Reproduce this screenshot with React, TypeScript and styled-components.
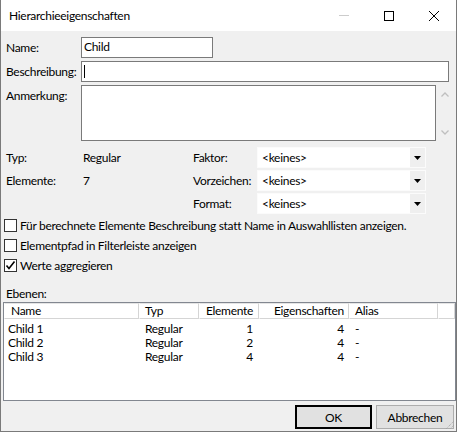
import styled, { createGlobalStyle } from "styled-components";

const GlobalStyle = createGlobalStyle`
  html, body {
    margin: 0;
    padding: 0;
    background: #ffffff;
  }
  body {
    font-family: Lato, "Liberation Sans", sans-serif;
    font-size: 12px;
    letter-spacing: -0.3px;
    color: #000;
  }
  * {
    box-sizing: border-box;
  }
`;

const Window = styled.div`
  position: relative;
  width: 457px;
  height: 432px;
  display: flex;
  flex-direction: column;
  background: #f0f0f0;
  border: 1px solid #7a7a7a;
  border-top: none;
  overflow: hidden;
`;

const TitleBar = styled.div`
  height: 31px;
  flex: none;
  display: flex;
  align-items: center;
  background: #ffffff;
  padding-left: 8px;
`;

const TitleText = styled.div`
  flex: 1;
  line-height: 16px;
`;

const CaptionButton = styled.div`
  width: 45px;
  height: 31px;
  display: flex;
  align-items: center;
  justify-content: center;
`;

const Content = styled.div`
  flex: 1;
  display: flex;
  flex-direction: column;
  padding: 6px 7px 0 5px;
`;

const TopForm = styled.div`
  display: grid;
  grid-template-columns: 75px 1fr;
  row-gap: 3px;
`;

const Label = styled.div<{ $top?: boolean }>`
  align-self: ${(p) => (p.$top ? "start" : "center")};
  padding-top: ${(p) => (p.$top ? "3px" : "0")};
  line-height: 16px;
  white-space: nowrap;
`;

const TextBox = styled.div<{ $width?: number; $height: number }>`
  width: ${(p) => (p.$width ? `${p.$width}px` : "auto")};
  height: ${(p) => p.$height}px;
  background: #ffffff;
  border: 1px solid #7a7a7a;
  padding: 1px 2px;
  line-height: 16px;
  display: flex;
  align-items: flex-start;
`;

const Caret = styled.span`
  display: block;
  width: 1px;
  height: 13px;
  margin-top: 2px;
  background: #000;
`;

const NoteRow = styled.div`
  display: flex;
  margin-right: -4px;
`;

const ScrollBar = styled.div`
  width: 17px;
  flex: none;
  display: flex;
  flex-direction: column;
  justify-content: space-between;
  align-items: center;
  padding: 7px 0 6px;
`;

const PropsGrid = styled.div`
  margin-top: 6px;
  display: grid;
  grid-template-columns: 77px 110px 64px 169px;
  grid-auto-rows: 21px;
  row-gap: 2px;
  align-items: center;
`;

const Combo = styled.div`
  height: 21px;
  display: flex;
  background: #ffffff;
  border: 1px solid #fbfbfb;
`;

const ComboText = styled.div`
  flex: 1;
  padding-left: 4px;
  line-height: 19px;
`;

const DropButton = styled.div`
  width: 15px;
  display: flex;
  align-items: center;
  justify-content: center;
  background: #efefef;
`;

const Checks = styled.div`
  margin-top: 1px;
  margin-left: -2px;
  display: flex;
  flex-direction: column;
`;

const CheckRow = styled.div`
  height: 20px;
  display: flex;
  align-items: center;
  gap: 3px;
`;

const Box = styled.div`
  width: 13px;
  height: 13px;
  border: 1px solid #333333;
  background: #ffffff;
  display: flex;
  align-items: center;
  justify-content: center;
`;

const SectionLabel = styled.div`
  margin-top: 11px;
  line-height: 16px;
`;

const ListView = styled.div`
  height: 99px;
  margin: 0 -7px 0 -3px;
  background: #ffffff;
  border: 1px solid #828790;
  overflow: hidden;
`;

const Columns = styled.div`
  display: grid;
  grid-template-columns: 135px 60px 60px 90px 89px 1fr;
`;

const Header = styled(Columns)`
  height: 16px;
`;

const HeadCell = styled.div<{ $right?: boolean; $pad: number }>`
  line-height: 14px;
  text-align: ${(p) => (p.$right ? "right" : "left")};
  padding: ${(p) => (p.$right ? `0 ${p.$pad}px 0 0` : `0 0 0 ${p.$pad}px`)};
  background: #ffffff;
  border: 1px solid #e5e5e5;
  border-left-color: #ffffff;
  border-right-color: #d5d5d5;
  border-bottom-color: #d5d5d5;
  white-space: nowrap;
`;

const Rows = styled.div`
  padding-top: 3px;
`;

const Cell = styled.div<{ $right?: boolean; $pad: number }>`
  line-height: 14px;
  text-align: ${(p) => (p.$right ? "right" : "left")};
  padding: ${(p) => (p.$right ? `0 ${p.$pad}px 0 0` : `0 0 0 ${p.$pad}px`)};
  white-space: nowrap;
`;

const ButtonRow = styled.div`
  margin: 4px -5px 0 0;
  display: flex;
  justify-content: flex-end;
  gap: 4px;
`;

const Button = styled.button<{ $default?: boolean; $width: number }>`
  width: ${(p) => p.$width}px;
  height: 24px;
  padding: 0;
  font-family: inherit;
  font-size: 12px;
  letter-spacing: inherit;
  color: #000;
  background: #e1e1e1;
  border: ${(p) => (p.$default ? "2px solid #000000" : "1px solid #adadad")};
`;

const Grip = styled.svg`
  position: absolute;
  right: 1px;
  bottom: 1px;
`;

const levels = [
  { name: "Child 1", typ: "Regular", elements: 1, props: 4, alias: "-" },
  { name: "Child 2", typ: "Regular", elements: 2, props: 4, alias: "-" },
  { name: "Child 3", typ: "Regular", elements: 4, props: 4, alias: "-" },
];

function Chevron({ up }: { up?: boolean }) {
  return (
    <svg width="8" height="5" viewBox="0 0 8 5">
      <path
        d={up ? "M0.5 4.5 L4 1 L7.5 4.5" : "M0.5 0.5 L4 4 L7.5 0.5"}
        fill="none"
        stroke="#bfbfbf"
        strokeWidth="1.3"
      />
    </svg>
  );
}

function Arrow() {
  return (
    <svg width="7" height="4" viewBox="0 0 7 4">
      <path d="M0 0 H7 L3.5 4 Z" fill="#000" />
    </svg>
  );
}

function Check({ checked, label }: { checked?: boolean; label: string }) {
  return (
    <CheckRow>
      <Box>
        {checked && (
          <svg width="11" height="11" viewBox="0 0 11 11">
            <path d="M1.5 5.5 L4 8.5 L9.5 1.5" fill="none" stroke="#000" strokeWidth="1.6" />
          </svg>
        )}
      </Box>
      <span>{label}</span>
    </CheckRow>
  );
}

function Select({ value }: { value: string }) {
  return (
    <Combo>
      <ComboText>{value}</ComboText>
      <DropButton>
        <Arrow />
      </DropButton>
    </Combo>
  );
}

export default function App() {
  return (
    <>
      <GlobalStyle />
      <Window>
        <TitleBar>
          <TitleText>Hierarchieeigenschaften</TitleText>
          <CaptionButton>
            <svg width="10" height="1" viewBox="0 0 10 1">
              <rect width="10" height="1" fill="#cccccc" />
            </svg>
          </CaptionButton>
          <CaptionButton>
            <svg width="10" height="10" viewBox="0 0 10 10">
              <rect x="0.5" y="0.5" width="9" height="9" fill="none" stroke="#000" />
            </svg>
          </CaptionButton>
          <CaptionButton>
            <svg width="10" height="10" viewBox="0 0 10 10">
              <path d="M0 0 L10 10 M10 0 L0 10" stroke="#000" strokeWidth="1" />
            </svg>
          </CaptionButton>
        </TitleBar>

        <Content>
          <TopForm>
            <Label>Name:</Label>
            <TextBox $width={132} $height={21}>Child</TextBox>
            <Label>Beschreibung:</Label>
            <TextBox $height={21}>
              <Caret />
            </TextBox>
            <Label $top>Anmerkung:</Label>
            <NoteRow>
              <TextBox style={{ flex: 1 }} $height={56} />
              <ScrollBar>
                <Chevron up />
                <Chevron />
              </ScrollBar>
            </NoteRow>
          </TopForm>

          <PropsGrid>
            <Label>Typ:</Label>
            <Label>Regular</Label>
            <Label>Faktor:</Label>
            <Select value="<keines>" />
            <Label>Elemente:</Label>
            <Label>7</Label>
            <Label>Vorzeichen:</Label>
            <Select value="<keines>" />
            <span />
            <span />
            <Label>Format:</Label>
            <Select value="<keines>" />
          </PropsGrid>

          <Checks>
            <Check label="Für berechnete Elemente Beschreibung statt Name in Auswahllisten anzeigen." />
            <Check label="Elementpfad in Filterleiste anzeigen" />
            <Check checked label="Werte aggregieren" />
          </Checks>

          <SectionLabel>Ebenen:</SectionLabel>
          <ListView>
            <Header>
              <HeadCell $pad={6}>Name</HeadCell>
              <HeadCell $pad={5}>Typ</HeadCell>
              <HeadCell $right $pad={5}>Elemente</HeadCell>
              <HeadCell $right $pad={4}>Eigenschaften</HeadCell>
              <HeadCell $pad={5}>Alias</HeadCell>
              <HeadCell $pad={0} />
            </Header>
            <Rows>
              {levels.map((l) => (
                <Columns key={l.name}>
                  <Cell $pad={4}>{l.name}</Cell>
                  <Cell $pad={6}>{l.typ}</Cell>
                  <Cell $right $pad={6}>{l.elements}</Cell>
                  <Cell $right $pad={5}>{l.props}</Cell>
                  <Cell $pad={6}>{l.alias}</Cell>
                  <Cell $pad={0} />
                </Columns>
              ))}
            </Rows>
          </ListView>

          <ButtonRow>
            <Button $default $width={77}>OK</Button>
            <Button $width={78}>Abbrechen</Button>
          </ButtonRow>
        </Content>

        <Grip width="12" height="12" viewBox="0 0 12 12">
          <path d="M11 3 L3 11 M11 7 L7 11" stroke="#a0a0a0" strokeWidth="1" strokeDasharray="1 1" />
        </Grip>
      </Window>
    </>
  );
}
